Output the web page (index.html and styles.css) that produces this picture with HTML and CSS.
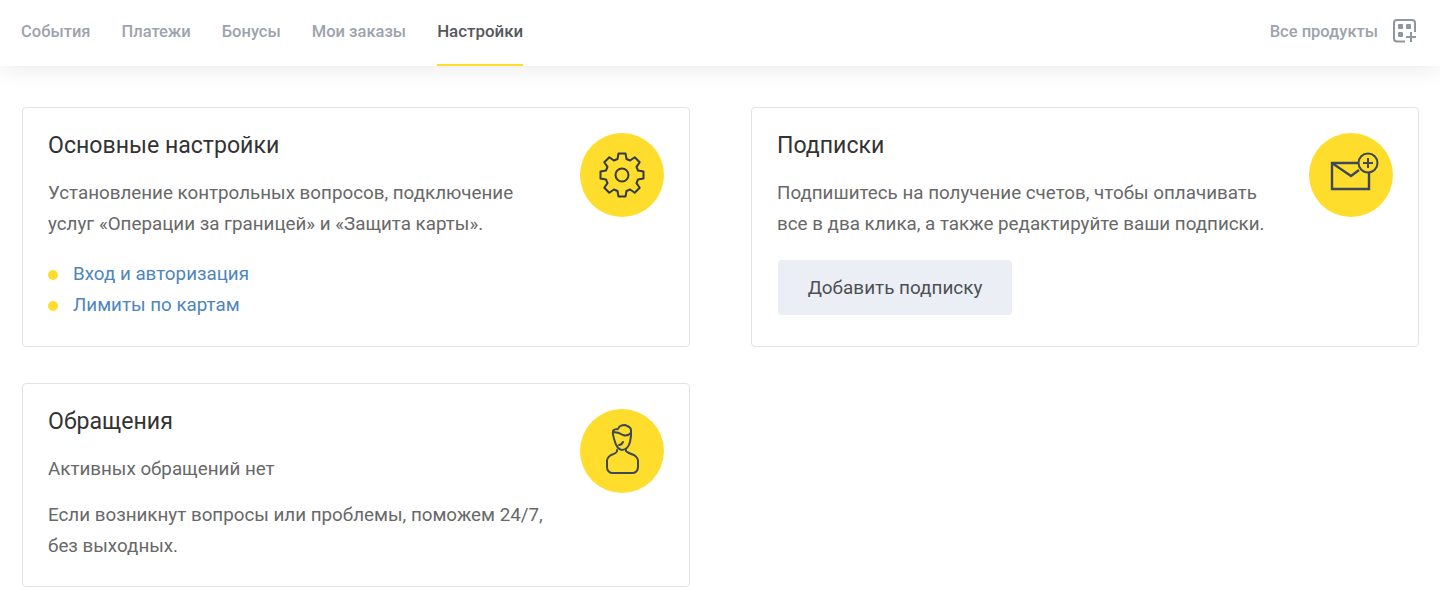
FILE: index.html
```html
<html>
<head>
    <meta charset="utf-8">
    <link rel="stylesheet" href="styles.css">
</head>
<body>
    <header class="topbar">
        <nav class="tabs">
            <a class="tab">События</a>
            <a class="tab">Платежи</a>
            <a class="tab">Бонусы</a>
            <a class="tab">Мои заказы</a>
            <a class="tab active">Настройки</a>
        </nav>
        <a class="products">
            <span>Все продукты</span>
            <svg class="products-icon" width="24" height="24" viewBox="0 0 24 24" fill="none">
                <path d="M12 22.500H4a3 3 0 0 1-3-3V4a3 3 0 0 1 3-3h15a3 3 0 0 1 3 3v9" stroke="#8f96a0" stroke-width="2"/>
                <rect x="5" y="5" width="5" height="5" rx="1" fill="#8f96a0"/>
                <rect x="13" y="5" width="5" height="5" rx="1" fill="#8f96a0"/>
                <rect x="5" y="13" width="5" height="5" rx="1" fill="#8f96a0"/>
                <path d="M18 13v10M13 18h10" stroke="#8f96a0" stroke-width="2"/>
            </svg>
        </a>
    </header>
    <main class="cards">
        <div class="column">
            <section class="card card-main">
                <div class="card-text">
                    <h2>Основные настройки</h2>
                    <p>Установление контрольных вопросов, подключение услуг «Операции за границей» и «Защита карты».</p>
                    <ul class="links">
                        <li><a>Вход и авторизация</a></li>
                        <li><a>Лимиты по картам</a></li>
                    </ul>
                </div>
                <div class="badge">
                    <svg width="46" height="46" viewBox="0 0 46 46" fill="none" stroke="#333a45" stroke-width="2" stroke-linejoin="round">
                        <path d="M19.500 1.500h7l1 5.500 3.600 1.500 4.600-3.200 5 5-3.200 4.600 1.500 3.600 5.500 1v7l-5.500 1-1.500 3.600 3.200 4.600-5 5-4.600-3.200-3.600 1.500-1 5.500h-7l-1-5.500-3.600-1.500-4.600 3.200-5-5 3.200-4.600-1.500-3.600-5.500-1v-7l5.500-1 1.500-3.600-3.200-4.600 5-5 4.600 3.200 3.600-1.500z"/>
                        <circle cx="23" cy="23" r="6.500"/>
                    </svg>
                </div>
            </section>
            <section class="card card-support">
                <div class="card-text">
                    <h2>Обращения</h2>
                    <p class="status">Активных обращений нет</p>
                    <p>Если возникнут вопросы или проблемы, поможем 24/7, без выходных.</p>
                </div>
                <div class="badge">
                    <svg width="84" height="84" viewBox="0 0 84 84" fill="none" stroke="#3f4855" stroke-width="2" stroke-linecap="round" stroke-linejoin="round">
                        <path d="M35 33c-1-4-3-7-2-11 1-2 3-2 5-2 1-3 4-4 7-4 3 1 6 2 6 5v6l-1 6c-1 4-4 8-8 8-3 0-6-4-7-8z"/>
                        <path d="M33 23c4 0 7 1 10 3 3 1 6 0 8-2"/>
                        <path d="M39 36c1 0 3-1 4-3"/>
                        <path d="M37 41v1c0 2-3 3-6 4-3 2-4 4-4 6v6c0 3 2 6 5 6h21c3 0 5-3 5-6v-6c0-2-1-4-4-6-3-1-6-2-8-4v-1"/>
                    </svg>
                </div>
            </section>
        </div>
        <div class="column">
            <section class="card card-subs">
                <div class="card-text">
                    <h2>Подписки</h2>
                    <p>Подпишитесь на получение счетов, чтобы оплачивать все в два клика, а также редактируйте ваши подписки.</p>
                    <button class="add-btn">Добавить подписку</button>
                </div>
                <div class="badge">
                    <svg width="84" height="84" viewBox="0 0 84 84" fill="none" stroke="#3f4855" stroke-width="2.400">
                        <path d="M50 30H23v26h37V40"/>
                        <path d="M23 30l19 13 8-6"/>
                        <circle cx="59" cy="30" r="9.500" stroke-width="2"/>
                        <path d="M59 25v10M54 30h10" stroke-width="2"/>
                    </svg>
                </div>
            </section>
        </div>
    </main>
</body>
</html>
```

FILE: styles.css
```css
body {
    margin: 0;
    background: #fff;
    font-family: Roboto, "Liberation Sans", sans-serif;
    color: #333;
}

.topbar {
    display: flex;
    justify-content: space-between;
    align-items: center;
    height: 66px;
    padding: 0 23px 0 21px;
    background: #fff;
    box-shadow: 0 2px 24px rgba(0, 0, 0, 0.09);
}

.tabs {
    display: flex;
    gap: 31px;
    height: 100%;
}

.tab {
    display: flex;
    align-items: center;
    box-sizing: border-box;
    height: 66px;
    padding-bottom: 4px;
    font-size: 16.500px;
    font-weight: 500;
    color: #9da3ad;
}

.tab.active {
    font-size: 16.900px;
    color: #55585c;
    box-shadow: inset 0 -2px 0 #ffdd2d;
}

.products {
    display: flex;
    align-items: center;
    gap: 15px;
    padding-bottom: 4px;
    font-size: 16.500px;
    font-weight: 500;
    color: #9da3ad;
}

.products-icon {
    display: block;
}

.cards {
    display: grid;
    grid-template-columns: 668px 668px;
    gap: 61px;
    padding: 41px 0 0 22px;
}

.column {
    display: flex;
    flex-direction: column;
    gap: 36px;
}

.card {
    display: flex;
    justify-content: space-between;
    box-sizing: border-box;
    padding: 25px 25px 0;
    border: 1px solid #e2e3e5;
    border-radius: 4px;
    background: #fff;
}

.card-main,
.card-subs {
    height: 240px;
}

.card-support {
    height: 204px;
}

.card-text {
    width: 505px;
}

h2 {
    margin: -1px 0 18px;
    font-size: 23.100px;
    font-weight: 400;
    line-height: 28px;
    color: #333;
}

p {
    margin: 0;
    font-size: 18.800px;
    line-height: 31px;
    color: #686868;
}

.status {
    margin-bottom: 15px;
}

.links {
    margin: 19px 0 0;
    padding: 0;
    list-style: none;
}

.links li {
    display: flex;
    align-items: center;
    gap: 15px;
    font-size: 18.800px;
    line-height: 31px;
    color: #4e85bd;
}

.links li::before {
    content: "";
    width: 10px;
    height: 10px;
    border-radius: 50%;
    background: #ffdd2d;
}

.add-btn {
    display: block;
    width: 234px;
    height: 55px;
    margin: 20px 0 0 1px;
    border: 0;
    border-radius: 4px;
    background: #ebeff5;
    font-family: inherit;
    font-size: 18.900px;
    color: #4c4f53;
}

.badge {
    display: flex;
    align-items: center;
    justify-content: center;
    flex: none;
    width: 84px;
    height: 84px;
    border-radius: 50%;
    background: #ffdd2d;
}
```
